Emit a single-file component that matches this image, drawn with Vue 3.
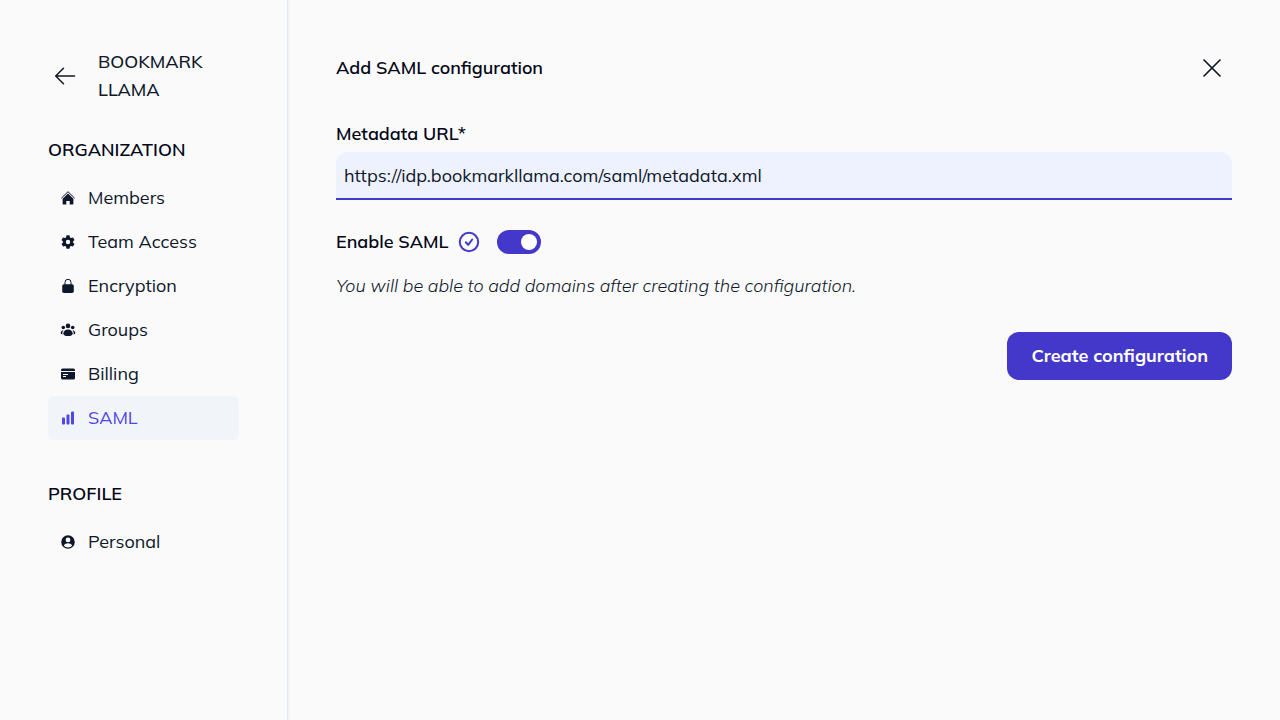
<script setup>
import { ref } from 'vue'

const metadataUrl = ref('https://idp.bookmarkllama.com/saml/metadata.xml')
const enabled = ref(true)

const sections = [
  {
    title: 'ORGANIZATION',
    items: [
      { name: 'Members', icon: 'home' },
      { name: 'Team Access', icon: 'gear' },
      { name: 'Encryption', icon: 'lock' },
      { name: 'Groups', icon: 'groups' },
      { name: 'Billing', icon: 'card' },
      { name: 'SAML', icon: 'chart', active: true }
    ]
  },
  {
    title: 'PROFILE',
    items: [{ name: 'Personal', icon: 'user' }]
  }
]
</script>

<template>
  <div class="page">
    <aside class="sidebar">
      <header class="brand">
        <a href="#" class="back" aria-label="Back">
          <svg viewBox="0 0 24 24" width="24" height="24" stroke-width="1.5">
            <path d="M21.5 12H2.7M10.5 4.2L2.7 12l7.8 7.8" />
          </svg>
        </a>
        <span class="brand-name">BOOKMARK LLAMA</span>
      </header>

      <nav v-for="section in sections" :key="section.title" class="section">
        <h2>{{ section.title }}</h2>
        <ul>
          <li v-for="item in section.items" :key="item.name">
            <a href="#" class="item" :class="{ active: item.active }">
              <svg class="icon" viewBox="0 0 16 16" width="16" height="16">
                <template v-if="item.icon === 'home'">
                  <path d="M1.3 8.3L8 1.7l6.7 6.6" fill="none" stroke="currentColor" stroke-width="1" />
                  <path d="M8 3.4l5.4 5.3v5a.8.8 0 0 1-.8.8H9.7V11H6.3v3.5H3.4a.8.8 0 0 1-.8-.8v-5z" />
                </template>
                <template v-else-if="item.icon === 'gear'">
                  <path
                    fill-rule="evenodd"
                    d="M6.5 1.3h3l.5 2.1 1 .6 2-.6L14.5 6 13 7.5v1l1.5 1.5-1.5 2.6-2-.6-1 .6-.5 2.1h-3L6 12.6 5 12l-2 .6L1.5 10 3 8.5v-1L1.5 6 3 3.4l2 .6 1-.6zM8 5.8a2.2 2.2 0 1 0 0 4.4 2.2 2.2 0 0 0 0-4.4z"
                  />
                </template>
                <template v-else-if="item.icon === 'lock'">
                  <path d="M5 7V4.300a3 3 0 0 1 6 0V7" fill="none" stroke="currentColor" stroke-width="1" />
                  <rect x="2.2" y="6.2" width="11.6" height="8.8" rx="1.8" />
                </template>
                <template v-else-if="item.icon === 'groups'">
                  <circle cx="8" cy="3.9" r="2.3" />
                  <circle cx="3.3" cy="5.5" r="1.8" />
                  <circle cx="12.7" cy="5.5" r="1.8" />
                  <path d="M8 7.5c2.8 0 4.7 1.9 4.7 4 0 1.7-1.9 2.6-4.7 2.6s-4.7-.9-4.7-2.6c0-2.1 1.9-4 4.7-4z" />
                  <path d="M3.4 8.2C1.7 8.5.7 9.6.7 11c0 .8.5 1.3 1.7 1.5-.3-1.6.1-3 1-4.3zM12.6 8.2c1.7.3 2.7 1.4 2.7 2.8 0 .8-.5 1.3-1.7 1.5.3-1.6-.1-3-1-4.3z" />
                </template>
                <template v-else-if="item.icon === 'card'">
                  <path d="M1 5V4a1.600 1.600 0 0 1 1.600-1.600h10.800A1.600 1.600 0 0 1 15 4v1z" />
                  <path
                    fill-rule="evenodd"
                    d="M1 6h14v6a1.600 1.600 0 0 1-1.600 1.600H2.600A1.600 1.600 0 0 1 1 12zM3 8v1h5V8zM3 10v1h3v-1z"
                  />
                </template>
                <template v-else-if="item.icon === 'chart'">
                  <rect x="2" y="7.5" width="3" height="7" rx="1" />
                  <rect x="6.5" y="4.5" width="3" height="10" rx="1" />
                  <rect x="11" y="1.5" width="3" height="13" rx="1" />
                </template>
                <template v-else>
                  <path
                    fill-rule="evenodd"
                    d="M8 1.2a6.8 6.8 0 1 1 0 13.6A6.8 6.8 0 0 1 8 1.2zM8 3.5a2.4 2.4 0 1 0 0 4.8 2.4 2.4 0 0 0 0-4.8zM3.8 11.3c1 1.4 2.5 2.2 4.2 2.2s3.2-.8 4.2-2.2C11.3 10 9.700 9.300 8 9.300s-3.300.7-4.200 2z"
                  />
                </template>
              </svg>
              <span>{{ item.name }}</span>
            </a>
          </li>
        </ul>
      </nav>
    </aside>

    <main class="content">
      <header class="title-bar">
        <h1>Add SAML configuration</h1>
        <button type="button" class="close" aria-label="Close">
          <svg viewBox="0 0 24 24" width="24" height="24" stroke-width="1.7">
            <path d="M4 4l16 16M20 4L4 20" />
          </svg>
        </button>
      </header>

      <form @submit.prevent>
        <label for="metadata-url" class="label">Metadata URL*</label>
        <input id="metadata-url" v-model="metadataUrl" type="text" class="field" />

        <div class="toggle-row">
          <label for="enable-saml" class="label">Enable SAML</label>
          <svg class="check" viewBox="0 0 24 24" width="24" height="24">
            <circle cx="12" cy="12" r="9.2" />
            <path d="M8.8 12.3l2.4 2.5 4-5.3" />
          </svg>
          <input id="enable-saml" v-model="enabled" type="checkbox" class="toggle" />
        </div>

        <p class="hint">You will be able to add domains after creating the configuration.</p>

        <div class="actions">
          <button type="submit" class="submit">Create configuration</button>
        </div>
      </form>
    </main>
  </div>
</template>

<style>
body {
  background: #fafafa;
}
</style>

<style scoped>
.page {
  display: flex;
  min-height: 100vh;
  background: #fafafa;
  color: #0f172a;
  font-family: Mulish, Muli, Lato, 'Open Sans', sans-serif;
  font-size: 18px;
  line-height: 28px;
}
.page * {
  box-sizing: border-box;
}
.sidebar {
  width: 288px;
  flex: none;
  box-sizing: border-box;
  padding: 48px;
  border-right: 1px solid #e2e8f0;
  box-shadow: 1px 0 2px rgba(0, 0, 0, 0.05);
}
.brand {
  display: flex;
  align-items: center;
  gap: 21px;
  margin-bottom: 32px;
}
.brand-name {
  font-weight: 500;
}
.back {
  display: flex;
  padding-left: 5px;
  color: inherit;
}
.back svg,
.close svg {
  fill: none;
  stroke: currentColor;
  stroke-linecap: round;
  stroke-linejoin: round;
}
.section + .section {
  margin-top: 40px;
}
h1,
h2 {
  margin: 0;
  font-size: inherit;
  font-weight: 600;
  color: #020617;
}
h2 {
  margin-bottom: 12px;
}
ul {
  margin: 0;
  padding: 0;
  list-style: none;
}
.item {
  display: flex;
  align-items: center;
  gap: 12px;
  padding: 8px 12px;
  border-radius: 6px;
  color: inherit;
  text-decoration: none;
}
.item.active {
  background: #f1f5f9;
  color: #4f46e5;
}
.icon {
  fill: currentColor;
}
.content {
  flex: 1;
  min-width: 0;
  padding: 48px;
}
.title-bar {
  display: flex;
  align-items: center;
  justify-content: space-between;
  margin-bottom: 32px;
}
.close {
  display: flex;
  padding: 8px;
  border: none;
  background: none;
  color: inherit;
  cursor: pointer;
}
.label {
  display: block;
  font-weight: 600;
  color: #020617;
}
.field {
  display: block;
  width: 100%;
  height: 48px;
  margin-top: 4px;
  padding: 0 8px;
  border: none;
  border-bottom: 2px solid #4338ca;
  border-radius: 12px 12px 0 0;
  outline: none;
  background: #eef2ff;
  color: inherit;
  font: inherit;
}
.toggle-row {
  display: flex;
  align-items: center;
  margin-top: 28px;
}
.check {
  margin: 0 16px 0 8px;
  fill: none;
  stroke: #4338ca;
  stroke-width: 2;
  stroke-linecap: round;
  stroke-linejoin: round;
}
.toggle {
  appearance: none;
  display: flex;
  width: 44px;
  height: 24px;
  margin: 0;
  padding: 4px;
  border-radius: 12px;
  background: #94a3b8;
  cursor: pointer;
}
.toggle::before {
  content: '';
  width: 16px;
  height: 16px;
  border-radius: 50%;
  background: #fff;
}
.toggle:checked {
  justify-content: flex-end;
  background: #4338ca;
}
.hint {
  margin: 16px 0 32px;
  font-style: italic;
  font-weight: 300;
}
.actions {
  display: flex;
  justify-content: flex-end;
}
.submit {
  height: 48px;
  padding: 0 24px;
  border: none;
  border-radius: 12px;
  background: #4338ca;
  color: #fff;
  font: inherit;
  font-weight: 700;
  cursor: pointer;
}
</style>
